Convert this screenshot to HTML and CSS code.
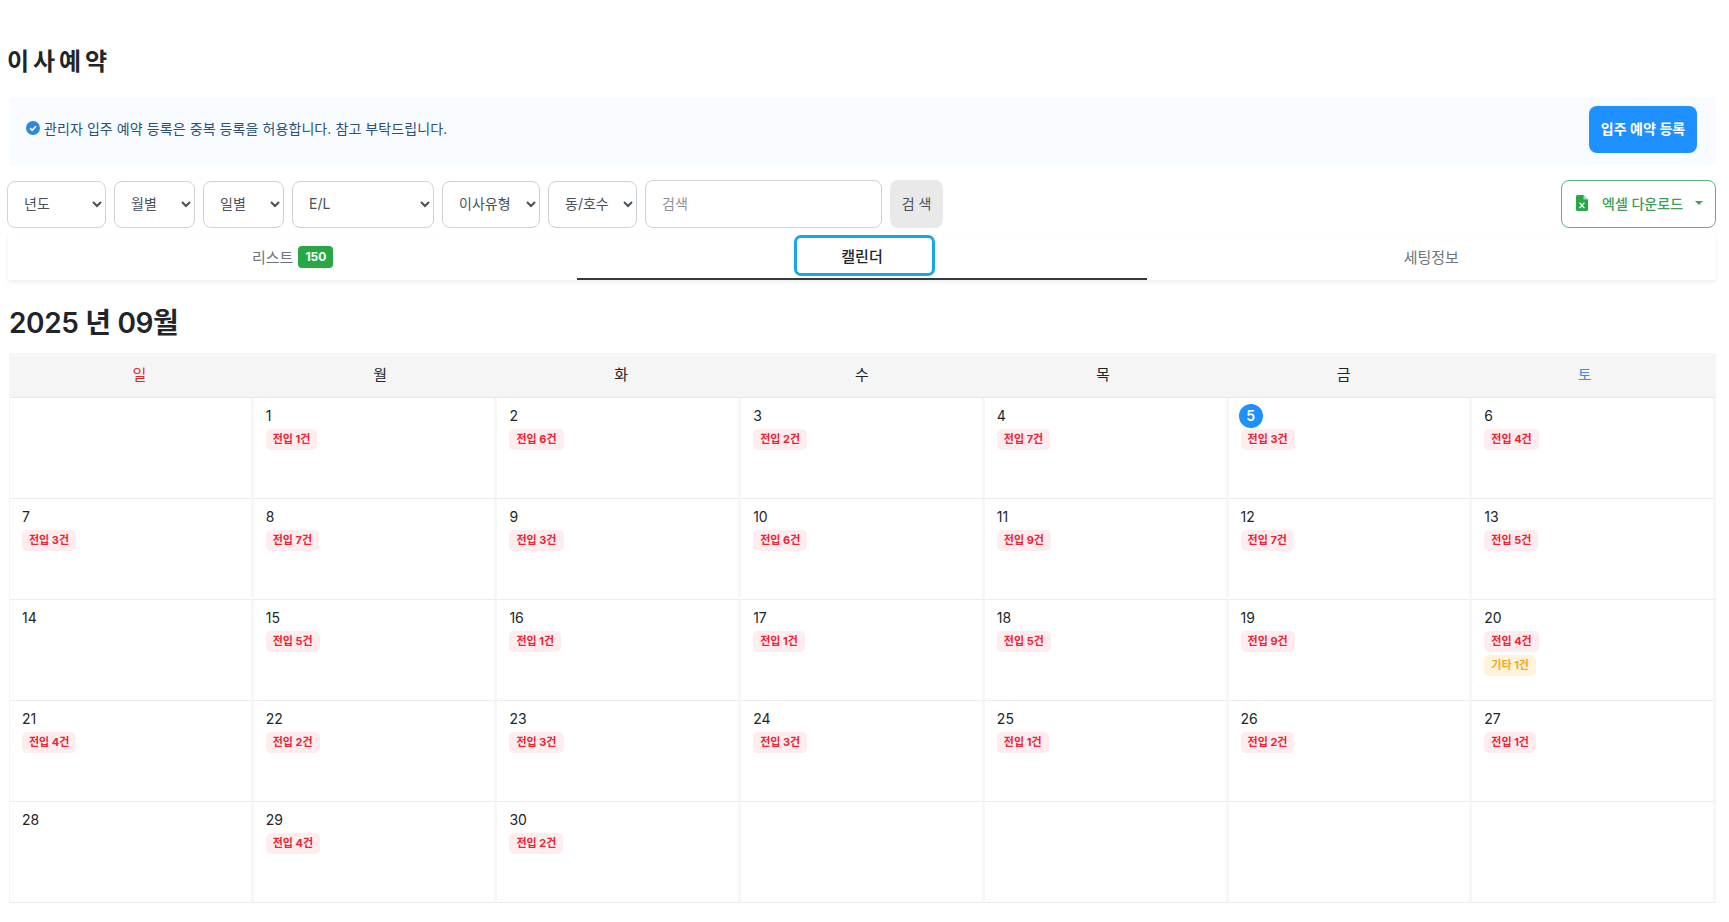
FILE: index.html
```html
<!DOCTYPE html>
<html lang="ko">
<head>
<meta charset="utf-8">
<title>이사 예약</title>
<link rel="stylesheet" href="styles.css">
</head>
<body>
<main class="page">
  <h1 class="title">이 사 예 약</h1>
  <section class="notice">
    <p class="notice-text">
      <svg class="notice-icon" viewBox="0 0 16 16" aria-hidden="true"><circle cx="8" cy="8" r="8" fill="#2f86dd"/><path d="M4.6 8.2l2.4 2.4 4.4-4.6" fill="none" stroke="#fff" stroke-width="1.9"/></svg>
      관리자 입주 예약 등록은 중복 등록을 허용합니다. 참고 부탁드립니다.
    </p>
    <button class="primary-btn" type="button">입주 예약 등록</button>
  </section>
  <section class="filters">
    <select class="sel sel-year"><option>년도</option></select>
    <select class="sel sel-month"><option>월별</option></select>
    <select class="sel sel-day"><option>일별</option></select>
    <select class="sel sel-el"><option>E/L</option></select>
    <select class="sel sel-type"><option>이사유형</option></select>
    <select class="sel sel-dong"><option>동/호수</option></select>
    <input class="search" type="text" placeholder="검색">
    <button class="search-btn" type="button">검 색</button>
    <button class="excel-btn" type="button">
      <svg class="excel-icon" viewBox="0 0 12 16" aria-hidden="true"><path d="M1.5 0H7.5L12 4.5V14.5A1.5 1.5 0 0 1 10.5 16H1.5A1.5 1.5 0 0 1 0 14.5V1.5A1.5 1.5 0 0 1 1.5 0Z" fill="#28a745"/><path d="M7.5 0V4.5H12Z" fill="#a9dcb5"/><path d="M3.6 7.6l4.8 5.6M8.4 7.6l-4.8 5.6" stroke="#fff" stroke-width="1.3" fill="none"/></svg>
      <span class="excel-label">엑셀 다운로드</span>
      <span class="caret"></span>
    </button>
  </section>
  <nav class="tabs">
    <div class="tab"><span>리스트</span><span class="count">150</span></div>
    <div class="tab tab-active"><span class="tab-focus">캘린더</span></div>
    <div class="tab"><span>세팅정보</span></div>
  </nav>
  <h2 class="month">2025 년 09월</h2>
  <section class="cal">
    <div class="dow-row">
      <div class="dow sun">일</div><div class="dow">월</div><div class="dow">화</div><div class="dow">수</div><div class="dow">목</div><div class="dow">금</div><div class="dow sat">토</div>
    </div>

    <div class="cell"></div>
    <div class="cell"><span class="num">1</span><span class="tag">전입 1건</span></div>
    <div class="cell"><span class="num">2</span><span class="tag">전입 6건</span></div>
    <div class="cell"><span class="num">3</span><span class="tag">전입 2건</span></div>
    <div class="cell"><span class="num">4</span><span class="tag">전입 7건</span></div>
    <div class="cell"><span class="num today">5</span><span class="tag">전입 3건</span></div>
    <div class="cell"><span class="num">6</span><span class="tag">전입 4건</span></div>

    <div class="cell"><span class="num">7</span><span class="tag">전입 3건</span></div>
    <div class="cell"><span class="num">8</span><span class="tag">전입 7건</span></div>
    <div class="cell"><span class="num">9</span><span class="tag">전입 3건</span></div>
    <div class="cell"><span class="num">10</span><span class="tag">전입 6건</span></div>
    <div class="cell"><span class="num">11</span><span class="tag">전입 9건</span></div>
    <div class="cell"><span class="num">12</span><span class="tag">전입 7건</span></div>
    <div class="cell"><span class="num">13</span><span class="tag">전입 5건</span></div>

    <div class="cell"><span class="num">14</span></div>
    <div class="cell"><span class="num">15</span><span class="tag">전입 5건</span></div>
    <div class="cell"><span class="num">16</span><span class="tag">전입 1건</span></div>
    <div class="cell"><span class="num">17</span><span class="tag">전입 1건</span></div>
    <div class="cell"><span class="num">18</span><span class="tag">전입 5건</span></div>
    <div class="cell"><span class="num">19</span><span class="tag">전입 9건</span></div>
    <div class="cell"><span class="num">20</span><span class="tag">전입 4건</span><span class="tag tag-etc">기타 1건</span></div>

    <div class="cell"><span class="num">21</span><span class="tag">전입 4건</span></div>
    <div class="cell"><span class="num">22</span><span class="tag">전입 2건</span></div>
    <div class="cell"><span class="num">23</span><span class="tag">전입 3건</span></div>
    <div class="cell"><span class="num">24</span><span class="tag">전입 3건</span></div>
    <div class="cell"><span class="num">25</span><span class="tag">전입 1건</span></div>
    <div class="cell"><span class="num">26</span><span class="tag">전입 2건</span></div>
    <div class="cell"><span class="num">27</span><span class="tag">전입 1건</span></div>

    <div class="cell"><span class="num">28</span></div>
    <div class="cell"><span class="num">29</span><span class="tag">전입 4건</span></div>
    <div class="cell"><span class="num">30</span><span class="tag">전입 2건</span></div>
    <div class="cell"></div>
    <div class="cell"></div>
    <div class="cell"></div>
    <div class="cell"></div>
  </section>
</main>
</body>
</html>
```
FILE: styles.css
```css
* { box-sizing: border-box; }
html, body { margin: 0; padding: 0; background: #fff; }
body {
  font-family: Inter, "Noto Sans CJK KR", "Noto Sans", sans-serif;
  font-size: 14px;
  color: #212529;
  overflow: hidden;
}
.page { padding: 46px 13px 0 8px; }
.title {
  margin: 0 0 19px -1px;
  font-size: 24px;
  line-height: 32px;
  font-weight: 700;
  letter-spacing: -0.9px;
}
.notice {
  display: flex;
  align-items: center;
  justify-content: space-between;
  height: 68px;
  margin-left: 1px;
  padding: 0 19px 4px 17px;
  background: #f8fbff;
}
.notice-text {
  display: flex;
  align-items: center;
  gap: 4px;
  margin: 0 0 2px;
  color: #2a5177;
  font-size: 14px;
  letter-spacing: 0.08px;
}
.notice-icon { width: 14px; height: 14px; }
.primary-btn {
  width: 108px;
  height: 47px;
  padding: 0 0 2px;
  border: 0;
  border-radius: 8px;
  background: #1e90ff;
  color: #fff;
  font: 600 14px Inter, "Noto Sans CJK KR", sans-serif;
}
.filters {
  display: flex;
  align-items: center;
  gap: 8px;
  margin: 15px 0 0 -1px;
  height: 48px;
}
.sel {
  height: 47px;
  padding: 0 8px 1px 12px;
  border: 1px solid #ced4da;
  border-radius: 8px;
  background-color: #fff;
  color: #495057;
  font: 14px Inter, "Noto Sans CJK KR", sans-serif;
}
.sel-year { width: 99px; }
.sel-month { width: 81px; }
.sel-day { width: 81px; }
.sel-el { width: 142px; }
.sel-type { width: 98px; }
.sel-dong { width: 89px; }
.search {
  width: 237px;
  height: 48px;
  padding: 0 16px 2px;
  border: 1px solid #ced4da;
  border-radius: 8px;
  font: 14px Inter, "Noto Sans CJK KR", sans-serif;
  color: #495057;
}
.search::placeholder { color: #8a9097; }
.search-btn {
  width: 53px;
  height: 48px;
  padding: 0 0 2px;
  border: 0;
  border-radius: 8px;
  background: #e9e9ea;
  color: #495057;
  font: 14px Inter, "Noto Sans CJK KR", sans-serif;
}
.excel-btn {
  display: flex;
  align-items: center;
  width: 155px;
  height: 48px;
  margin-left: auto;
  padding: 0 12px 2px 14px;
  border: 1px solid #5cb377;
  border-radius: 8px;
  background: #fff;
  color: #3d9e59;
  font: 500 14px Inter, "Noto Sans CJK KR", sans-serif;
}
.excel-icon { width: 12px; height: 16px; flex: none; }
.excel-label { margin-left: 14px; }
.caret {
  width: 0;
  height: 0;
  margin-left: auto;
  border-left: 4px solid transparent;
  border-right: 4px solid transparent;
  border-top: 4px solid #3d9e59;
}
.tabs {
  display: grid;
  grid-template-columns: repeat(3, 1fr);
  height: 45px;
  margin-top: 7px;
  background: #fff;
  box-shadow: 0 2px 4px rgba(0, 0, 0, 0.07);
}
.tab {
  display: flex;
  align-items: center;
  justify-content: center;
  gap: 5px;
  padding-bottom: 3px;
  color: #6c757d;
  font-size: 15px;
}
.tab-active {
  position: relative;
  align-items: flex-start;
  padding: 0;
  border-bottom: 2px solid #343a40;
  color: #212529;
  font-weight: 500;
}
.tab-focus {
  display: flex;
  align-items: center;
  justify-content: center;
  width: 141px;
  height: 41px;
  margin-left: 6px;
  padding-right: 6px;
  border: 3px solid #17a8e3;
  border-radius: 7px;
}
.count {
  margin-top: 1px;
  padding: 2px 7px;
  border-radius: 4px;
  background: #28a745;
  color: #fff;
  font-size: 12px;
  font-weight: 700;
  line-height: 18px;
}
.month {
  margin: 24px 0 11px 1px;
  font-size: 28px;
  line-height: 38px;
  font-weight: 600;
  letter-spacing: -0.35px;
}
.cal {
  display: grid;
  grid-template-columns: repeat(7, 1fr);
  grid-template-rows: 45px repeat(5, 101px);
  margin-left: 1px;
  border-left: 1px solid #f5f5f5;
}
.dow-row {
  grid-column: 1 / -1;
  display: grid;
  grid-template-columns: repeat(7, 1fr);
  padding: 0 11px 3px 9px;
  background: #f5f5f5;
  border-bottom: 1px solid #e9e9e9;
}
.dow {
  display: flex;
  align-items: center;
  justify-content: center;
  font-size: 15px;
}
.sun { color: #e6262b; }
.sat { color: #3d8fe8; }
.cell {
  display: flex;
  flex-direction: column;
  align-items: flex-start;
  padding: 6px 10px 0;
  border-right: 3px solid #f7f7f7;
  border-bottom: 1px solid #ececec;
}
.num {
  height: 24px;
  margin-left: 2px;
  font-size: 14px;
  line-height: 24px;
}
.today {
  width: 24px;
  margin-left: 0;
  border-radius: 50%;
  background: #1e90ff;
  color: #fff;
  font-weight: 600;
  text-align: center;
}
.tag {
  margin: 1px 0 3px 2px;
  padding: 0 7px;
  height: 21px;
  border-radius: 5px;
  background: #ffecef;
  color: #ee2233;
  font-size: 11px;
  font-weight: 700;
  line-height: 21px;
}
.tag-etc {
  margin-top: 0;
  background: #fff3dc;
  color: #f5a81c;
}
```
